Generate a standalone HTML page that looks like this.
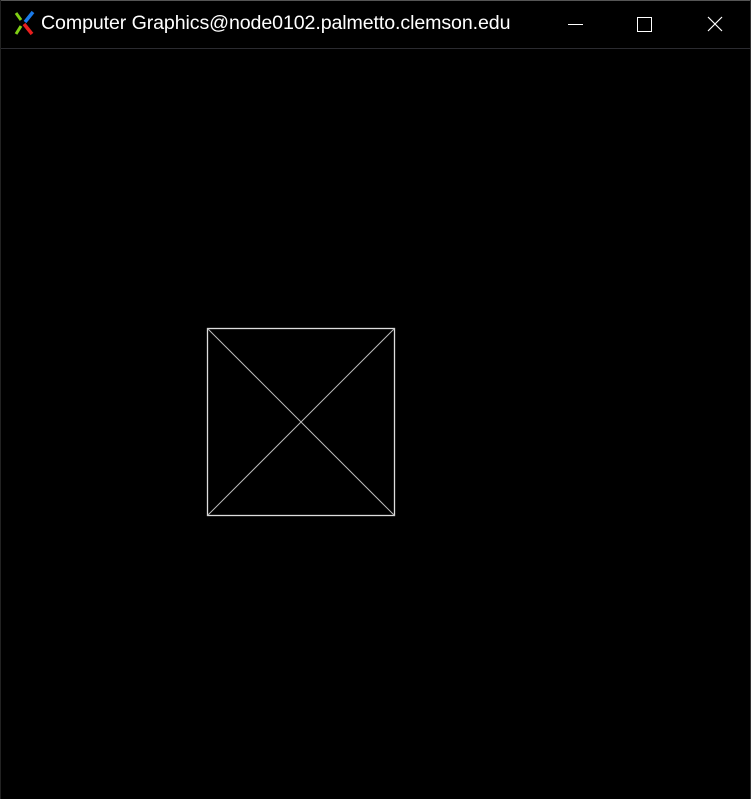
<!DOCTYPE html>
<html><head><style>
html,body{margin:0;padding:0;background:#000;width:751px;height:799px;overflow:hidden}
.t{position:absolute;left:41px;top:12px;color:#fff;font:19.6px "Liberation Sans",sans-serif;letter-spacing:-0.1px;white-space:nowrap}
</style></head><body>
<div style="position:absolute;left:0;top:0;width:751px;height:1px;background:#555"></div>
<div style="position:absolute;left:0;top:48px;width:751px;height:1px;background:#2b2b30"></div>
<div style="position:absolute;left:750px;top:0;width:1px;height:799px;background:#333"></div>
<div style="position:absolute;left:0;top:0;width:1px;height:799px;background:#222"></div>
<svg style="position:absolute;left:0;top:0" width="751" height="799">
<path d="M16 13 L21 20" stroke="#7fce14" stroke-width="3"/>
<path d="M21 26 L16 34" stroke="#7fce14" stroke-width="3"/>
<path d="M33 12 L25 22" stroke="#1a7ae8" stroke-width="3.5"/>
<path d="M24 24 L32 34" stroke="#e81e1e" stroke-width="3.5"/>
<line x1="568" y1="24.5" x2="583" y2="24.5" stroke="#fff" stroke-width="1"/>
<rect x="637.5" y="17.5" width="14" height="14" fill="none" stroke="#fff" stroke-width="1"/>
<path d="M708 17 L722 31 M722 17 L708 31" stroke="#fff" stroke-width="1.2"/>
<rect x="207.5" y="328.5" width="187" height="187" fill="none" stroke="#ddd" stroke-width="1.3"/>
<path d="M207.5 328.5 L394.5 515.5 M394.5 328.5 L207.5 515.5" stroke="#bbb" stroke-width="1"/>
</svg>
<div class="t">Computer Graphics@node0102.palmetto.clemson.edu</div>
</body></html>
